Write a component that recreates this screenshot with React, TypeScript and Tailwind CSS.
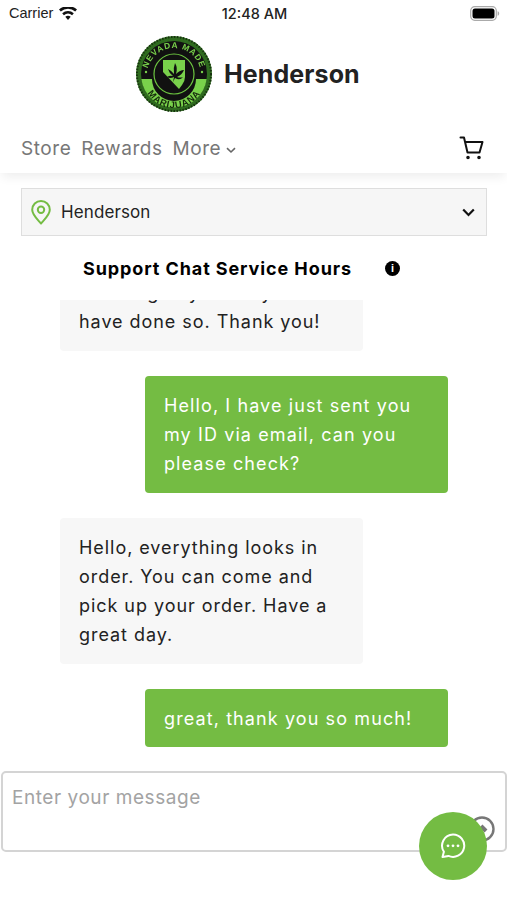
import React from "react";

const Logo = () => (
  <svg width="78" height="78" viewBox="0 0 78 78" className="blur-[0.4px]">
    <defs>
      <path id="topArc" d="M12 40a27 27 0 0 1 54 0" />
      <path id="botArc" d="M8 42a31 31 0 0 0 62 0" />
    </defs>
    <circle cx="39" cy="39" r="38" fill="#2f6b1f" />
    <circle cx="39" cy="39" r="37" fill="none" stroke="#17330f" strokeWidth="2" strokeDasharray="1.5 1.5" />
    <circle cx="39" cy="39" r="33" fill="#111" />
    <path d="M6.3 44 H17 A22 22 0 0 0 61 44 H71.7 A33 33 0 0 1 6.3 44Z" fill="#79d14b" />
    <circle cx="39" cy="39" r="20" fill="#111" stroke="#6cc440" strokeWidth="1.2" />
    <text fontSize="8.4" fontWeight="700" fill="#79d14b" fontFamily="Liberation Sans, sans-serif" letterSpacing="0.9">
      <textPath href="#topArc" startOffset="50%" textAnchor="middle">NEVADA MADE</textPath>
    </text>
    <text fontSize="9.4" fontWeight="700" fill="#14280c" fontFamily="Liberation Sans, sans-serif" letterSpacing="0.8">
      <textPath href="#botArc" startOffset="50%" textAnchor="middle">MARIJUANA</textPath>
    </text>
    <circle cx="11" cy="37" r="1.2" fill="#79d14b" />
    <circle cx="67" cy="37" r="1.2" fill="#79d14b" />
    <path d="M28 25 H50 V42 Q50 46 47 50 L44 54 L28 37Z" fill="#79d14b" />
    <path d="M40 28 Q43 33 41 39 Q45 35 49 35 Q47 40 42 42 Q45 43 48 42 Q45 46 40 43 L38 47 L39 42 Q35 44 32 42 Q35 40 38 41 Q34 38 33 34 Q37 36 39 39 Q38 33 40 28Z" fill="#111" />
  </svg>
);

const Cart = () => (
  <svg width="26" height="24" viewBox="0 0 26 24" fill="none" stroke="#111" strokeWidth="2" strokeLinecap="round" strokeLinejoin="round">
    <path d="M1.5 1.5H5L8.5 16.5H20.5L23.5 6H6.5" />
    <circle cx="9" cy="21.5" r="0.8" fill="#111" />
    <circle cx="20" cy="21.5" r="0.8" fill="#111" />
  </svg>
);

const Pin = () => (
  <svg width="20" height="25" viewBox="0 0 20 25" fill="none" stroke="#74bc43" strokeWidth="2">
    <path d="M10 23.5C7 20 1.2 15 1.2 9.8a8.8 8.8 0 0 1 17.6 0C18.8 15 13 20 10 23.5Z" strokeLinejoin="round" />
    <circle cx="10" cy="9.8" r="3.2" />
  </svg>
);

const Bubble = ({ me, lines }: { me?: boolean; lines: string[] }) => (
  <div
    className={
      me
        ? "ml-[145px] w-[303px] rounded-[4px] bg-[#74bc43] px-[19px] pb-[14px] pt-[15px] text-[18px] leading-[29.3px] tracking-[1.1px] text-white"
        : "ml-[60px] w-[303px] rounded-[4px] bg-[#f7f7f7] px-[19px] pb-[14px] pt-[15px] text-[18px] leading-[29.3px] tracking-[0.95px] text-[#222]"
    }
  >
    {lines.map((l) => (
      <div key={l} className="whitespace-nowrap">{l}</div>
    ))}
  </div>
);

export default function App() {
  return (
    <div className="relative flex h-[900px] w-[507px] flex-col overflow-hidden bg-white font-['Inter',sans-serif]">
      <div className="flex h-[27px] shrink-0 items-center pl-[9px] pr-[7px] text-[14.5px] text-[#222]">
        <div className="flex flex-1 items-center gap-[6px]">
          <span className="font-['Liberation_Sans',sans-serif]">Carrier</span>
          <svg width="18" height="13" viewBox="0 0 18 13" fill="#111">
            <path d="M9 13l-2.7-3.2a4.2 4.2 0 0 1 5.4 0Z" />
            <path d="M4.9 8.2 3.2 6.2a9 9 0 0 1 11.6 0l-1.7 2a6.4 6.4 0 0 0-8.2 0Z" />
            <path d="M1.8 4.5 0 2.5a13.6 13.6 0 0 1 18 0l-1.8 2a11 11 0 0 0-14.4 0Z" />
          </svg>
        </div>
        <span className="font-medium">12:48 AM</span>
        <div className="flex flex-1 justify-end">
          <svg width="30" height="15" viewBox="0 0 30 15">
            <rect x="0.7" y="0.7" width="25.6" height="13.6" rx="4" fill="none" stroke="#aaa" strokeWidth="1.2" />
            <rect x="2.5" y="2.5" width="22" height="10" rx="2.5" fill="#000" />
            <path d="M27.6 5.2v4.6c1-.3 1.6-1.2 1.6-2.3s-.6-2-1.6-2.3Z" fill="#aaa" />
          </svg>
        </div>
      </div>

      <div className="flex h-[96px] shrink-0 items-start pl-[135px] pt-[8px]">
        <Logo />
        <span className="ml-[11px] mt-[22px] text-[25px] font-bold leading-[34px] tracking-[0.1px] text-[#222]">Henderson</span>
      </div>

      <div className="flex h-[50px] shrink-0 items-center justify-between pl-[21px] pr-[22px] shadow-[0_6px_10px_-2px_rgba(0,0,0,0.07)]">
        <div className="mt-[3px] flex items-center text-[19px] tracking-[0.55px] text-[#777]">
          <span>Store</span>
          <span className="ml-[10px]">Rewards</span>
          <span className="ml-[10px]">More</span>
          <svg width="10" height="7" viewBox="0 0 10 7" fill="none" stroke="#666" strokeWidth="1.6" className="ml-[5px] mt-[2px]">
            <path d="M1 1.2 5 5l4-3.8" />
          </svg>
        </div>
        <Cart />
      </div>

      <div className="shrink-0 pl-[21px] pr-[20px] pt-[15px]">
        <div className="flex h-[48px] items-center justify-between border border-[#dedede] bg-[#f6f6f6] pl-[9px] pr-[11px]">
          <div className="flex items-center gap-[10px]">
            <Pin />
            <span className="mt-[2px] text-[17px] tracking-[0.1px] text-[#222]">Henderson</span>
          </div>
          <svg width="13" height="9" viewBox="0 0 13 9" fill="none" stroke="#111" strokeWidth="2.2">
            <path d="M1.2 1.5 6.5 7l5.3-5.5" />
          </svg>
        </div>
      </div>

      <div className="flex h-[64px] shrink-0 items-center pl-[83px]">
        <span className="w-[302px] whitespace-nowrap text-[18px] font-bold tracking-[0.9px] text-black">Support Chat Service Hours</span>
        <span className="flex h-[15px] w-[15px] items-center justify-center rounded-full bg-black font-['Liberation_Sans',sans-serif] text-[11px] font-bold leading-none text-white">i</span>
      </div>

      <div className="flex h-[471px] shrink-0 flex-col justify-end gap-[25px] overflow-hidden pb-[24px]">
        <Bubble lines={["Please go by and try it if", "have done so. Thank you!"]} />
        <Bubble me lines={["Hello, I have just sent you", "my ID via email, can you", "please check?"]} />
        <Bubble lines={["Hello, everything looks in", "order. You can come and", "pick up your order. Have a", "great day."]} />
        <Bubble me lines={["great, thank you so much!"]} />
      </div>

      <div className="ml-[1px] h-[81px] w-[506px] shrink-0 rounded-[5px] border-2 border-[#d4d4d4] px-[9px] pb-[10px] pt-[12px] text-[19px] leading-[26px] tracking-[0.55px] text-[#a3a3a3]">
        Enter your message
      </div>

      <svg width="26" height="28" viewBox="0 0 26 28" fill="none" className="absolute left-[469px] top-[815px]">
        <circle cx="13" cy="14" r="11.5" stroke="#777" strokeWidth="2.4" />
        <path d="M12 11l5 5" stroke="#777" strokeWidth="4" />
      </svg>

      <div className="absolute left-[419px] top-[812px] flex h-[68px] w-[68px] items-center justify-center rounded-full bg-[#74bc43]">
        <svg width="26" height="26" viewBox="0 0 26 26" fill="none">
          <path d="M13 1.5a11.2 11.2 0 1 1-4.6 21.4L2.5 24l1.4-5.2A11.2 11.2 0 0 1 13 1.5Z" stroke="#fff" strokeWidth="2" strokeLinejoin="round" />
          <circle cx="8" cy="12.8" r="1.4" fill="#fff" />
          <circle cx="13" cy="12.8" r="1.4" fill="#fff" />
          <circle cx="18" cy="12.8" r="1.4" fill="#fff" />
        </svg>
      </div>
    </div>
  );
}
